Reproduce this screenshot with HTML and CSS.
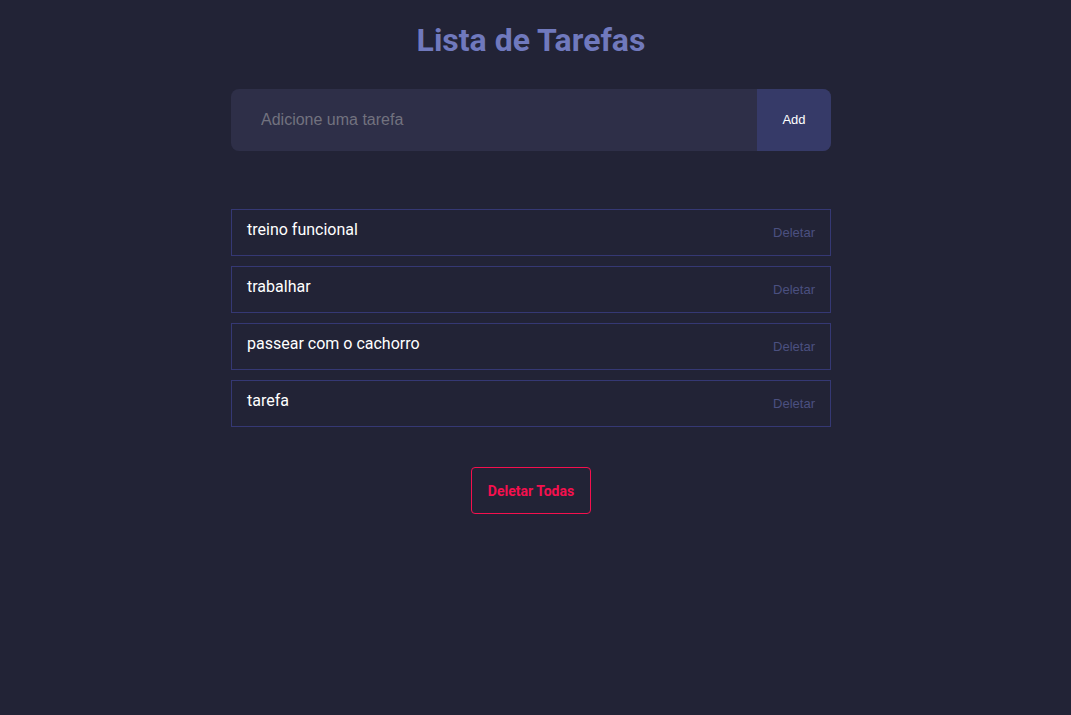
FILE: index.html
```html
<!DOCTYPE html>
<html lang="pt-BR">
<head>
<meta charset="utf-8">
<title>Lista de Tarefas</title>
<link rel="stylesheet" href="styles.css">
</head>
<body>
<main class="app">
  <h1 class="title">Lista de Tarefas</h1>
  <form class="add-form">
    <input class="add-input" type="text" placeholder="Adicione uma tarefa">
    <button class="add-btn" type="button">Add</button>
  </form>
  <ul class="tasks">
    <li class="task"><span class="task-text">treino funcional</span><button class="del-btn" type="button">Deletar</button></li>
    <li class="task"><span class="task-text">trabalhar</span><button class="del-btn" type="button">Deletar</button></li>
    <li class="task"><span class="task-text">passear com o cachorro</span><button class="del-btn" type="button">Deletar</button></li>
    <li class="task"><span class="task-text">tarefa</span><button class="del-btn" type="button">Deletar</button></li>
  </ul>
  <div class="footer">
    <button class="del-all" type="button">Deletar Todas</button>
  </div>
</main>
</body>
</html>
```
FILE: styles.css
```css
html, body {
  margin: 0;
  padding: 0;
  background: #222336;
  min-height: 100%;
}
body {
  padding-right: 9px;
  font-family: Roboto, "Liberation Sans", sans-serif;
}
.app {
  width: 600px;
  margin: 0 auto;
  display: flex;
  flex-direction: column;
}
.title {
  margin: 21px 0 0;
  text-align: center;
  font-size: 32px;
  line-height: 38px;
  font-weight: 700;
  color: #7079bd;
}
.add-form {
  margin-top: 30px;
  display: flex;
  height: 62px;
  border-radius: 8px;
  overflow: hidden;
  background: #2e2f48;
}
.add-input {
  flex: 1;
  border: 0;
  outline: none;
  background: transparent;
  padding: 0 30px;
  font-family: "Liberation Sans", Arial, sans-serif;
  font-size: 16px;
  color: #ddd;
}
.add-input::placeholder {
  color: #72727f;
}
.add-btn {
  width: 74px;
  border: 0;
  background: #363a68;
  color: #fff;
  font-family: "Liberation Sans", Arial, sans-serif;
  font-size: 13px;
  padding: 0 0 2px;
}
.tasks {
  list-style: none;
  margin: 58px 0 0;
  padding: 0;
  display: flex;
  flex-direction: column;
  gap: 10px;
}
.task {
  box-sizing: border-box;
  height: 47px;
  border: 1px solid #353874;
  display: flex;
  justify-content: space-between;
  align-items: flex-start;
  padding: 10px 15px 0 15px;
}
.task-text {
  color: #fff;
  font-size: 16px;
  line-height: 19px;
}
.del-btn {
  border: 0;
  background: transparent;
  padding: 0;
  margin-top: 5px;
  color: #4b5080;
  font-family: "Liberation Sans", Arial, sans-serif;
  font-size: 13px;
  line-height: 15px;
}
.footer {
  margin-top: 40px;
  display: flex;
  justify-content: center;
}
.del-all {
  width: 120px;
  height: 47px;
  border: 1px solid #f5104e;
  border-radius: 4px;
  background: transparent;
  color: #f5104e;
  font-family: Roboto, "Liberation Sans", sans-serif;
  font-weight: 700;
  font-size: 14px;
  padding: 0;
}
```
